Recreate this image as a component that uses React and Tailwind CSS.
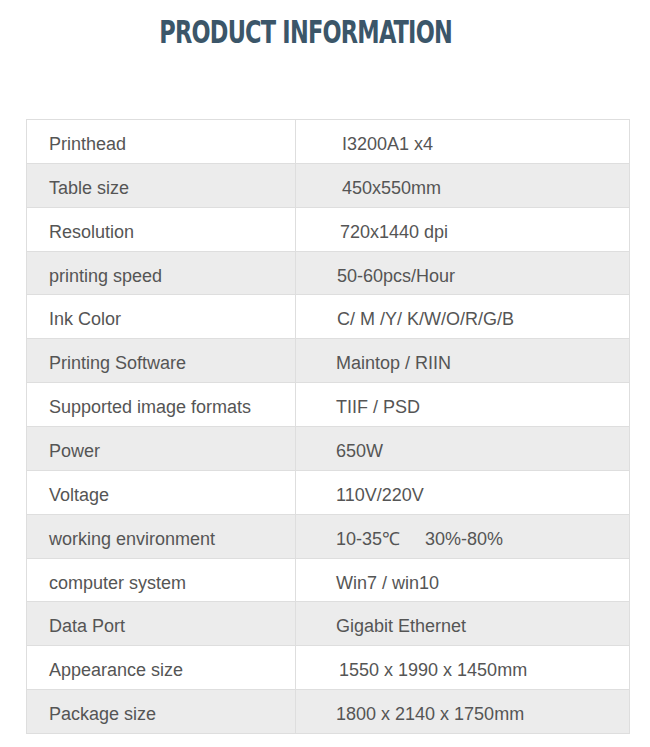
// App.jsx
const rows = [
  { label: "Printhead", value: "I3200A1 x4", pad: "pl-[46px]" },
  { label: "Table size", value: "450x550mm", pad: "pl-[46px]" },
  { label: "Resolution", value: "720x1440 dpi", pad: "pl-[44px]" },
  { label: "printing speed", value: "50-60pcs/Hour", pad: "pl-[41px]" },
  { label: "Ink Color", value: "C/ M /Y/ K/W/O/R/G/B", pad: "pl-[41px]" },
  { label: "Printing Software", value: "Maintop / RIIN", pad: "pl-[40px]" },
  { label: "Supported image formats", value: "TIIF / PSD", pad: "pl-[40px]" },
  { label: "Power", value: "650W", pad: "pl-[40px]" },
  { label: "Voltage", value: "110V/220V", pad: "pl-[40px]" },
  { label: "working environment", value: "10-35℃\u00a0\u00a0\u00a0\u00a0 30%-80%", pad: "pl-[40px]" },
  { label: "computer system", value: "Win7 / win10", pad: "pl-[40px]" },
  { label: "Data Port", value: "Gigabit Ethernet", pad: "pl-[40px]" },
  { label: "Appearance size", value: "1550 x 1990 x 1450mm", pad: "pl-[43px]" },
  { label: "Package size", value: "1800 x 2140 x 1750mm", pad: "pl-[40px]" },
];

export default function App() {
  return (
    <div
      className="w-[650px] h-[747px] bg-white overflow-hidden"
      style={{ fontFamily: '"Liberation Sans", Arial, sans-serif' }}
    >
      {/* Heading */}
      <div className="h-[119px] pt-[14px] flex justify-center pr-[38px]">
        <h1
          className="text-[32px] leading-[36px] font-bold tracking-[-1px] text-[#3b5669] scale-x-[0.78] whitespace-nowrap"
          style={{ fontFamily: '"DejaVu Sans Condensed", "DejaVu Sans", sans-serif' }}
        >
          PRODUCT INFORMATION
        </h1>
      </div>

      {/* Spec table */}
      <div className="ml-[26px] w-[604px] border-t border-l border-r border-[#dedede]">
        {rows.map((row, i) => (
          <div
            key={row.label}
            className={`flex h-[43.86px] border-b border-[#dedede] text-[18px] text-[#555] ${
              i % 2 === 1 ? "bg-[#ececec]" : "bg-white"
            }`}
          >
            <div className="w-[269px] flex items-center pl-[22px] pt-[6px] border-r border-[#dedede]">
              {row.label}
            </div>
            <div className={`flex-1 flex items-center pt-[6px] ${row.pad}`}>{row.value}</div>
          </div>
        ))}
      </div>
    </div>
  );
}
